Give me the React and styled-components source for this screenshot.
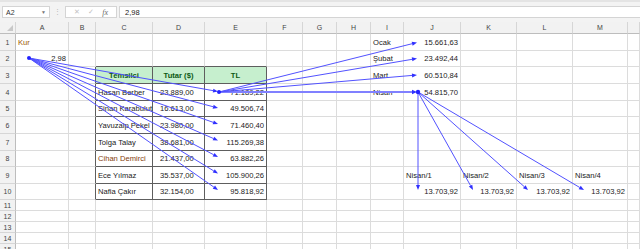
import React from 'react'
import styled, { createGlobalStyle } from 'styled-components'

const Global = createGlobalStyle`
  html, body {
    margin: 0;
    padding: 0;
    background: #ffffff;
    overflow: hidden;
  }
  body {
    font-family: "Liberation Sans", Arial, sans-serif;
  }
`

const COLS = [16, 53, 27, 57, 52, 62, 36, 34, 34, 33, 57, 56, 56, 55, 12]
const LETTERS = ['', 'A', 'B', 'C', 'D', 'E', 'F', 'G', 'H', 'I', 'J', 'K', 'L', 'M', '']
const ROW_H = [17, 16, 17, 17, 16, 17, 17, 16, 17, 16, 11, 11, 11, 11, 11]

const GRID_LINE = '#dcdcdc'
const TABLE_LINE = '#5e5e5e'

const Page = styled.div`
  position: relative;
  width: 640px;
  height: 249px;
  overflow: hidden;
  background: #f3f3f3;
`

const FormulaBar = styled.div`
  height: 22px;
  display: flex;
  align-items: center;
  padding: 0 0 0 2px;
  box-sizing: border-box;
  border-top: 2px solid #e4e4e4;
`

const NameBox = styled.div`
  width: 48px;
  height: 12px;
  background: #fff;
  border: 1px solid #d4d4d4;
  display: flex;
  align-items: center;
  justify-content: space-between;
  padding: 0 3px;
  box-sizing: border-box;
  font-size: 7px;
  color: #333;
`

const Caret = styled.span`
  font-size: 5px;
  color: #777;
`

const Dots = styled.span`
  width: 15px;
  text-align: center;
  font-size: 7px;
  color: #b5b5b5;
`

const FxBox = styled.div`
  width: 52px;
  height: 12px;
  background: #fff;
  border: 1px solid #d4d4d4;
  box-sizing: border-box;
  display: flex;
  align-items: center;
  justify-content: space-around;
  padding: 0 4px;
  font-size: 7px;
  color: #c2c2c2;
`

const Fx = styled.span`
  font-family: "Liberation Serif", serif;
  font-style: italic;
  font-size: 8px;
  color: #6a6a6a;
`

const FormulaInput = styled.div`
  flex: 1;
  height: 12px;
  margin-left: 2px;
  background: #fff;
  border: 1px solid #d4d4d4;
  border-right: none;
  box-sizing: border-box;
  display: flex;
  align-items: center;
  padding-left: 5px;
  font-size: 7.5px;
  color: #222;
`

const Sheet = styled.div`
  display: grid;
  grid-template-columns: ${COLS.map((c) => c + 'px').join(' ')};
  grid-template-rows: 12px ${ROW_H.map((r) => r + 'px').join(' ')};
  background: #fff;
`

const ColHead = styled.div`
  background: #f2f2f2;
  border-right: 1px solid #d6d6d6;
  border-bottom: 1px solid #bdbdbd;
  box-sizing: border-box;
  display: flex;
  align-items: center;
  justify-content: center;
  font-size: 7px;
  color: #444;
  position: relative;
`

const Corner = styled(ColHead)`
  &::after {
    content: '';
    position: absolute;
    right: 2px;
    bottom: 2px;
    border-left: 6px solid transparent;
    border-bottom: 6px solid #c8c8c8;
  }
`

const RowHead = styled.div`
  background: #f2f2f2;
  border-right: 1px solid #bdbdbd;
  border-bottom: 1px solid #d6d6d6;
  box-sizing: border-box;
  display: flex;
  align-items: center;
  justify-content: center;
  font-size: 7px;
  color: #444;
`

const Cell = styled.div`
  box-sizing: border-box;
  border-right: 1px solid ${(p) => (p.$darkRight ? TABLE_LINE : GRID_LINE)};
  border-bottom: 1px solid ${(p) => (p.$darkBottom ? TABLE_LINE : GRID_LINE)};
  background: ${(p) => p.$fill || '#fff'};
  display: flex;
  align-items: center;
  justify-content: ${(p) =>
    p.$align === 'right' ? 'flex-end' : p.$align === 'center' ? 'center' : 'flex-start'};
  padding: ${(p) => (p.$indent ? `0 2px 0 ${p.$indent}px` : '0 2px')};
  padding-top: 1px;
  font-size: 7.6px;
  font-weight: ${(p) => (p.$bold ? 700 : 400)};
  color: ${(p) => p.$color || '#1a1a1a'};
  white-space: nowrap;
  line-height: 1;
`

const Overlay = styled.svg`
  position: absolute;
  left: 0;
  top: 0;
  pointer-events: none;
`

const HEADER_GREEN = '#c6efce'
const BROWN = '#9c5700'

const people = [
  ['Hasan Berber', '23.889,00', '71.189,22'],
  ['Sinan Karabulut', '16.613,00', '49.506,74'],
  ['Yavuzalp Pekel', '23.980,00', '71.460,40'],
  ['Tolga Talay', '38.681,00', '115.269,38'],
  ['Cihan Demirci', '21.437,00', '63.882,26', '#843c0c'],
  ['Ece Yılmaz', '35.537,00', '105.900,26'],
  ['Nafia Çakır', '32.154,00', '95.818,92'],
]

const months = [
  ['Ocak', '15.661,63'],
  ['Şubat', '23.492,44'],
  ['Mart', '60.510,84'],
  ['Nisan', '54.815,70'],
]

// cell contents keyed by "row:col"
const cells = {}
cells['1:1'] = { text: 'Kur', color: BROWN }
cells['2:1'] = { text: '2,98', align: 'right' }
cells['3:3'] = { text: 'Temsilci', align: 'center', bold: true, fill: HEADER_GREEN, color: '#0b5a14' }
cells['3:4'] = { text: 'Tutar ($)', align: 'center', bold: true, fill: HEADER_GREEN, color: '#0b5a14' }
cells['3:5'] = { text: 'TL', align: 'center', bold: true, fill: HEADER_GREEN, color: '#0b5a14' }
people.forEach(([name, usd, tl, color], i) => {
  const r = i + 4
  cells[`${r}:3`] = { text: name, color }
  cells[`${r}:4`] = { text: usd, indent: 7 }
  cells[`${r}:5`] = { text: tl, align: 'right' }
})
months.forEach(([m, v], i) => {
  cells[`${i + 1}:9`] = { text: m }
  cells[`${i + 1}:10`] = { text: v, align: 'right' }
})
;[10, 11, 12, 13].forEach((c, i) => {
  cells[`9:${c}`] = { text: `Nisan/${i + 1}` }
  cells[`10:${c}`] = { text: '13.703,92', align: 'right' }
})

const inTable = (r, c) => r >= 3 && r <= 10 && c >= 3 && c <= 5

// precedent / dependent arrows
const A2 = [29, 58]
const E4 = [219, 92]
const J4 = [418, 92]
const arrows = [
  ...[91.5, 108, 124, 140.5, 157, 173.5, 190].map((y) => [A2, [218, y]]),
  [E4, [417, 42.5]],
  [E4, [417, 58.5]],
  [E4, [417, 75]],
  [J4, [418, 190]],
  [J4, [473, 190]],
  [J4, [528, 190]],
  [J4, [584, 190]],
]

const Arrow = ({ from, to, width = 1, color = '#5252ff' }) => {
  const [x1, y1] = from
  const [x2, y2] = to
  const a = Math.atan2(y2 - y1, x2 - x1)
  const len = 5
  const hw = 2
  const bx = x2 - Math.cos(a) * len
  const by = y2 - Math.sin(a) * len
  const px = -Math.sin(a) * hw
  const py = Math.cos(a) * hw
  return (
    <g>
      <line x1={x1} y1={y1} x2={bx} y2={by} stroke={color} strokeWidth={width} />
      <polygon
        points={`${x2},${y2} ${bx + px},${by + py} ${bx - px},${by - py}`}
        fill="#3030ff"
      />
    </g>
  )
}

const App = () => {
  const rows = []
  for (let r = 1; r <= ROW_H.length; r++) {
    rows.push(<RowHead key={`h${r}`}>{r}</RowHead>)
    for (let c = 1; c < COLS.length; c++) {
      const d = cells[`${r}:${c}`] || {}
      const darkRight = inTable(r, c) || (c === 2 && r >= 3 && r <= 10)
      const darkBottom = inTable(r, c) || (r === 2 && c >= 3 && c <= 5)
      rows.push(
        <Cell
          key={`${r}:${c}`}
          $align={d.align}
          $bold={d.bold}
          $color={d.color}
          $fill={d.fill}
          $indent={d.indent}
          $darkRight={darkRight}
          $darkBottom={darkBottom}>
          {d.text}
        </Cell>
      )
    }
  }

  return (
    <Page>
      <Global />
      <FormulaBar>
        <NameBox>
          A2 <Caret>▼</Caret>
        </NameBox>
        <Dots>⋮</Dots>
        <FxBox>
          <span>✕</span>
          <span>✓</span>
          <Fx>fx</Fx>
        </FxBox>
        <FormulaInput>2,98</FormulaInput>
      </FormulaBar>
      <Sheet>
        <Corner />
        {LETTERS.slice(1).map((l, i) => (
          <ColHead key={i}>{l}</ColHead>
        ))}
        {rows}
      </Sheet>
      <Overlay width="640" height="249" viewBox="0 0 640 249">
        <line x1={E4[0]} y1={92} x2={412} y2={92} stroke="#8080ff" strokeWidth="2" />
        <polygon points="417,92 412,89.8 412,94.2" fill="#3030ff" />
        {arrows.map(([f, t], i) => (
          <Arrow key={i} from={f} to={t} />
        ))}
        <circle cx={A2[0]} cy={A2[1]} r="2" fill="#2222ff" />
        <circle cx={E4[0]} cy={E4[1]} r="2" fill="#2222ff" />
        <circle cx={J4[0]} cy={J4[1]} r="2.2" fill="#2222ff" />
      </Overlay>
    </Page>
  )
}

export default App
